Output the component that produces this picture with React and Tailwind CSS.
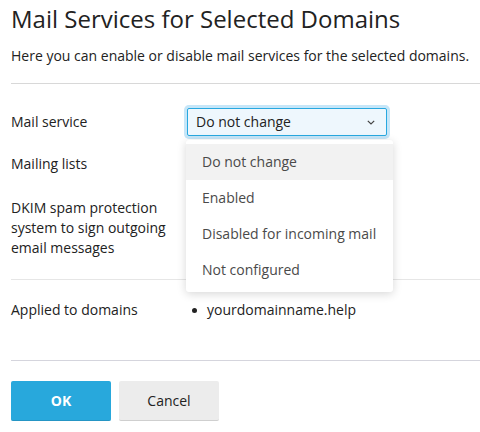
import { useState } from 'react'

const options = ['Do not change', 'Enabled', 'Disabled for incoming mail', 'Not configured'];

const Chevron = () => (
  <svg width="8" height="5" viewBox="0 0 8 5" fill="none">
    <path d="M0.8 0.8 L4 4 L7.2 0.8" stroke="#444" strokeWidth="1.2" />
  </svg>
);

export default function App() {
  const [value, setValue] = useState('Do not change');

  return (
    <div className="w-[480px] h-[432px] bg-white pl-[11px] pt-[3px] text-[#222] text-[14px] leading-[20px]" style={{ fontFamily: '"Open Sans", "Liberation Sans", sans-serif' }}>
      <h1 className="text-[24px] leading-[32px] font-normal">Mail Services for Selected Domains</h1>
      <p className="mt-[11px]">Here you can enable or disable mail services for the selected domains.</p>
      <div className="mt-[17px] h-px bg-[#d8d8d8]"></div>

      {/* form rows */}
      <div className="relative">
        <div className="flex items-center mt-[24px]">
          <div className="w-[176px]">Mail service</div>
          <div className="w-[200px] h-[28px] flex items-center justify-between pl-[8px] pr-[11px] border border-[#28a8e0] bg-[#eef7fd] rounded-[2px] shadow-[0_0_0_3px_#c6e6f8]">
            <span>{value}</span>
            <Chevron />
          </div>
        </div>

        <div className="flex items-center mt-[14px] h-[28px]">
          <div className="w-[176px]">Mailing lists</div>
        </div>

        <div className="flex mt-[20px]">
          <div className="w-[160px]">DKIM spam protection system to sign outgoing email messages</div>
        </div>

        {/* open dropdown */}
        <div className="absolute left-[175px] top-[32px] w-[207px] py-[4px] bg-white rounded-[3px] shadow-[0_2px_10px_rgba(0,0,0,0.16)] z-10">
          {options.map((o) => (
            <div
              key={o}
              onClick={() => setValue(o)}
              className={`h-[36px] flex items-center px-[16px] text-[#4a4a4a] cursor-pointer ${o === value ? 'bg-[#f2f2f2]' : ''}`}
            >
              {o}
            </div>
          ))}
        </div>
      </div>

      <div className="mt-[21px] h-px bg-[#e6e6e6]"></div>

      <div className="flex mt-[20px]">
        <div className="w-[176px]">Applied to domains</div>
        <div className="flex items-center">
          <span className="w-[5px] h-[5px] rounded-full bg-[#222] ml-[5px] mr-[10px]"></span>
          <span>yourdomainname.help</span>
        </div>
      </div>

      <div className="mt-[40px] h-px bg-[#d5d5dd]"></div>

      <div className="flex gap-[8px] mt-[20px]">
        <button className="w-[100px] h-[40px] rounded-[2px] bg-[#28a8dc] text-white font-bold border-b border-[#2595c4]">OK</button>
        <button className="w-[100px] h-[40px] rounded-[2px] bg-[#ececec] text-[#222] border-b border-[#cfcfcf]">Cancel</button>
      </div>
    </div>
  );
}
